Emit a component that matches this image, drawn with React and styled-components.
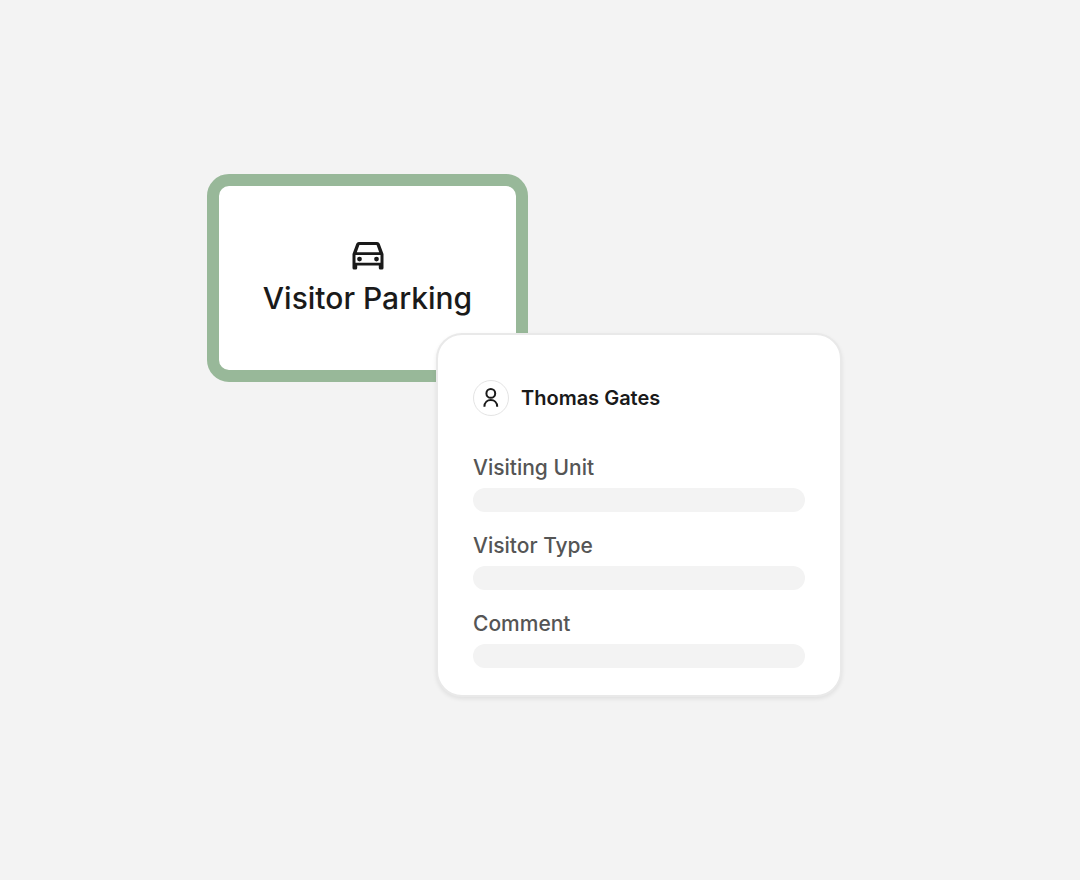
import React from 'react';
import styled, { createGlobalStyle } from 'styled-components';

const GlobalStyle = createGlobalStyle`
  * {
    box-sizing: border-box;
  }
  body {
    margin: 0;
    background: #ffffff;
    font-family: Inter, 'Liberation Sans', sans-serif;
  }
`;

export const StPage = styled.main`
  display: flex;
  justify-content: center;
  align-items: center;
  min-height: calc(100vh - 1px);
  padding: 16px 47px 25px 16px;
  background: #f3f3f3;
`;

export const StStack = styled.div`
  display: flex;
  flex-direction: column;
  width: 100%;
  max-width: 635px;
`;

export const StParkingCard = styled.section`
  align-self: flex-start;
  display: flex;
  flex-direction: column;
  align-items: center;
  gap: 10px;
  width: 321px;
  max-width: 100%;
  padding: 56px 24px 54px;
  border: 12px solid #98b899;
  border-radius: 22px;
  background: #ffffff;
`;

export const StTitle = styled.h1`
  margin: 0;
  font-weight: 550;
  font-size: 30px;
  line-height: 36px;
  white-space: nowrap;
  color: #1a1a1a;
`;

export const StVisitorCard = styled.form`
  position: relative;
  align-self: flex-end;
  display: flex;
  flex-direction: column;
  gap: 36px;
  width: 406px;
  max-width: 100%;
  margin-top: -49px;
  padding: 45px 35px 27px;
  border: 2px solid #e9e9e9;
  border-radius: 26px;
  background: #ffffff;
  box-shadow: 0 2px 4px rgba(0, 0, 0, 0.08);
`;

export const StVisitor = styled.div`
  display: flex;
  align-items: center;
  gap: 12px;
`;

export const StAvatar = styled.span`
  display: flex;
  justify-content: center;
  align-items: center;
  width: 36px;
  height: 36px;
  border: 1px solid #e4e4e4;
  border-radius: 50%;
`;

export const StName = styled.h2`
  margin: 0;
  font-weight: 600;
  font-size: 20px;
  line-height: 32px;
  color: #1a1a1a;
`;

export const StFields = styled.div`
  display: flex;
  flex-direction: column;
  gap: 18px;
`;

export const StField = styled.div`
  display: flex;
  flex-direction: column;
  gap: 4px;
`;

export const StLabel = styled.label`
  font-weight: 550;
  font-size: 21px;
  line-height: 32px;
  color: #555555;
`;

export const StInput = styled.input`
  width: 100%;
  height: 24px;
  padding: 2px 12px;
  border: 0;
  border-radius: 12px;
  background: #f3f3f3;
  font-family: inherit;
  font-size: 14px;
  color: #1a1a1a;
`;

export function CarSvg(props) {
  return (
    <svg {...props} width="32" height="28" viewBox="0 0 32 28" fill="#1a1a1a" aria-hidden="true">
      <path
        fillRule="evenodd"
        d="M6.9 0H25.1Q27 0 27.7 1.8L31.5 12V26Q31.5 27.5 30 27.5H28.3Q26.8 27.5 26.8 26V23.6H5.2V26Q5.2 27.5 3.7 27.5H2Q.5 27.5 .5 26V12L4.3 1.8Q5 0 6.9 0ZM7.4 3L4.8 10.2H27.2L24.6 3ZM3.5 13.1V20.7H28.5V13.1Z"
      />
      <circle cx="7.5" cy="17.1" r="2.4" />
      <circle cx="24.5" cy="17.1" r="2.4" />
    </svg>
  );
}

export function PersonSvg(props) {
  return (
    <svg
      {...props}
      width="20"
      height="22"
      viewBox="0 0 20 22"
      fill="none"
      stroke="#1a1a1a"
      strokeWidth="2"
      aria-hidden="true"
    >
      <circle cx="9.8" cy="6.4" r="4.4" />
      <path d="M3.4 19.8C3.4 10.8 16.2 10.8 16.2 19.8" />
    </svg>
  );
}

const fields = [
  { id: 'visiting-unit', label: 'Visiting Unit' },
  { id: 'visitor-type', label: 'Visitor Type' },
  { id: 'comment', label: 'Comment' },
];

export default function App() {
  return (
    <>
      <GlobalStyle />
      <StPage>
        <StStack>
          <StParkingCard>
            <CarSvg />
            <StTitle>Visitor Parking</StTitle>
          </StParkingCard>
          <StVisitorCard>
            <StVisitor>
              <StAvatar>
                <PersonSvg />
              </StAvatar>
              <StName>Thomas Gates</StName>
            </StVisitor>
            <StFields>
              {fields.map(({ id, label }) => (
                <StField key={id}>
                  <StLabel htmlFor={id}>{label}</StLabel>
                  <StInput id={id} name={id} type="text" />
                </StField>
              ))}
            </StFields>
          </StVisitorCard>
        </StStack>
      </StPage>
    </>
  );
}
